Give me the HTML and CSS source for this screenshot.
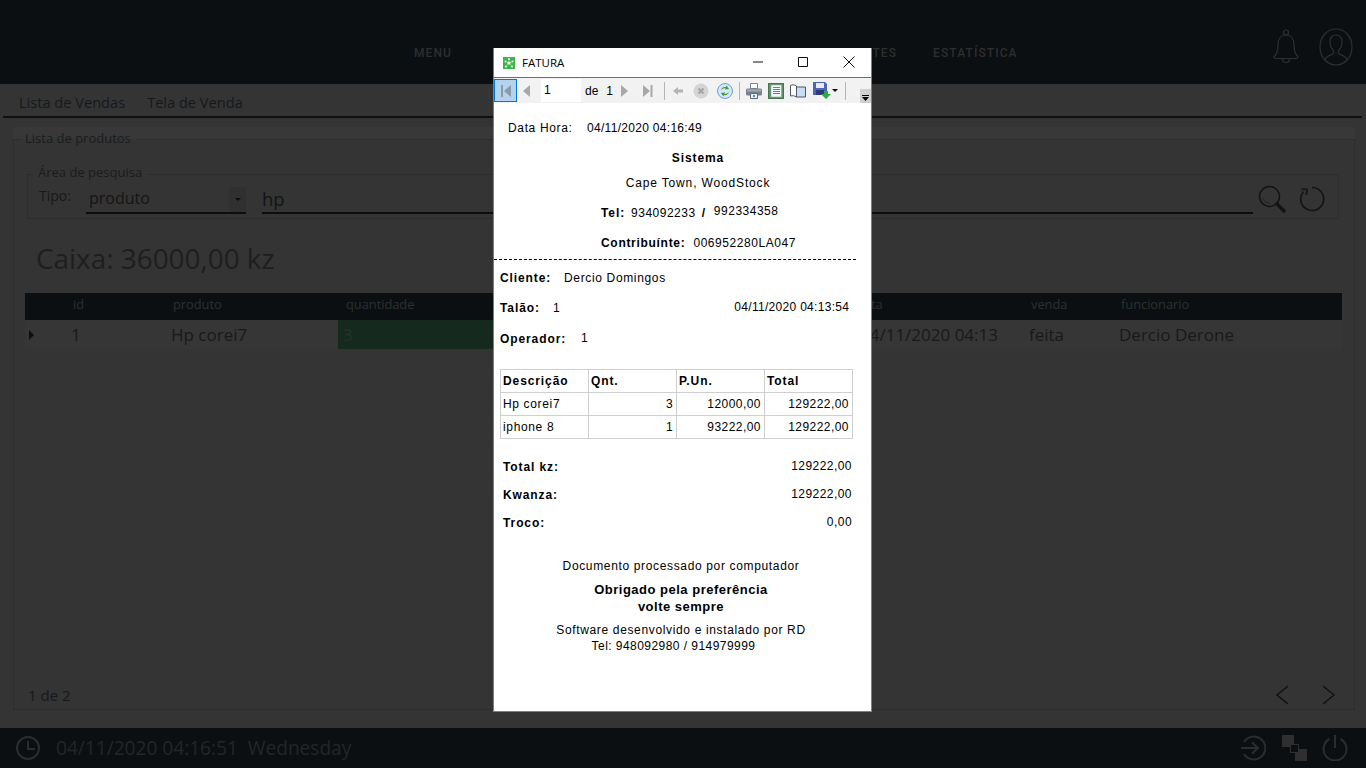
FILE: index.html
```html
<!DOCTYPE html>
<html lang="pt">
<head>
    <meta charset="utf-8">
    <title>Fatura</title>
    <link rel="stylesheet" href="styles.css">
</head>
<body>
    <header class="top-bar">
        <nav class="main-nav">
            <span>MENU</span>
            <span class="nav-far">CLIENTES</span>
            <span>ESTATÍSTICA</span>
        </nav>
        <svg class="bell-icon" viewBox="0 0 26 36" width="26" height="36">
            <path d="M1 28c3-3 4-6 4-12 0-6 3-10 8-10s8 4 8 10c0 6 1 9 4 12 0 1-1 1.500-2 1.500H3c-1 0-2-.5-2-1.500z"/>
            <circle cx="13" cy="3.500" r="2.500"/>
            <path d="M9.500 30a3.500 3.500 0 0 0 7 0"/>
        </svg>
        <svg class="user-icon" viewBox="0 0 34 38" width="34" height="38">
            <ellipse cx="17" cy="19" rx="16" ry="18"/>
            <path d="M6 32c1-4 6-5 8-6 1-1 1-3 0-4-2-2-3-5-3-8 0-5 3-7 6-7s6 2 6 7c0 3-1 6-3 8-1 1-1 3 0 4 2 1 7 2 8 6"/>
        </svg>
    </header>

    <main class="content">
        <div class="tabs">
            <span>Lista de Vendas</span>
            <span>Tela de Venda</span>
        </div>
        <div class="panel">
            <fieldset class="products">
                <legend>Lista de produtos</legend>
                <fieldset class="search">
                    <legend>Área de pesquisa</legend>
                    <label class="search-label">Tipo:</label>
                    <div class="search-select">produto<span class="select-btn"><i class="caret"></i></span></div>
                    <div class="search-input">hp</div>
                    <svg class="search-icon" viewBox="0 0 28 28" width="28" height="28">
                        <circle cx="11.500" cy="11.500" r="10"/>
                        <path class="thin" d="M5 13c1 3 4 5 7 5"/>
                        <path class="thick" d="M19 19l7 7"/>
                    </svg>
                    <svg class="reload-icon" viewBox="0 0 26 28" width="26" height="28">
                        <path d="M13 2.500a11.500 11.500 0 1 1-8.500 4"/>
                        <path d="M2.500 4l5.500.5-.5 5.500"/>
                    </svg>
                </fieldset>
                <div class="balance">Caixa: 36000,00 kz</div>
                <div class="grid-head">
                    <span></span><span>id</span><span>produto</span><span>quantidade</span><span>data</span><span>venda</span><span>funcionario</span>
                </div>
                <div class="grid-row">
                    <span class="row-arrow"></span><span>1</span><span>Hp corei7</span><span class="cell-green">3</span><span class="cell-date">04/11/2020 04:13</span><span>feita</span><span>Dercio Derone</span>
                </div>
                <div class="pager">
                    <span>1 de 2</span>
                    <svg class="pager-prev" viewBox="0 0 14 20" width="14" height="20"><path d="M13 1L2 10l11 9"/></svg>
                    <svg class="pager-next" viewBox="0 0 14 20" width="14" height="20"><path d="M1 1l11 9-11 9"/></svg>
                </div>
            </fieldset>
        </div>
    </main>

    <footer class="status-bar">
        <svg class="status-icon clock" viewBox="0 0 26 26" width="26" height="26">
            <circle cx="13" cy="13" r="11"/>
            <path d="M13 6v8h7"/>
        </svg>
        <span class="status-date">04/11/2020 04:16:51</span>
        <span class="status-day">Wednesday</span>
        <svg class="status-icon login" viewBox="0 0 26 26" width="26" height="26">
            <path d="M4 7a11.500 11.500 0 1 1 0 12"/>
            <path d="M1 13h16M12 7.500l6 5.500-6 5.500"/>
        </svg>
        <div class="windows-icon"><i></i><i></i><i></i></div>
        <svg class="status-icon power" viewBox="0 0 26 26" width="26" height="26">
            <path d="M7.500 4a11.500 11.500 0 1 0 11 0"/>
            <path d="M13 0v13"/>
        </svg>
    </footer>

    <div class="window">
        <div class="title-bar">
            <svg class="app-icon" viewBox="0 0 12 12" width="12" height="12">
                <rect width="12" height="12" fill="#3cb54a"/>
                <path d="M6 6V2M6 6L2.500 4.500M6 6l3.500-1.500M6 6L3 9.500M6 6l3 3.500" stroke="#a5e0ae" stroke-width=".6"/>
                <circle cx="6" cy="6" r="1.600" fill="#fff"/>
                <circle cx="6" cy="2" r="1" fill="#fff"/>
                <circle cx="2.500" cy="4.500" r="1" fill="#fff"/>
                <circle cx="9.500" cy="4.500" r="1" fill="#fff"/>
                <circle cx="3" cy="9.500" r="1" fill="#fff"/>
                <circle cx="9" cy="9.500" r="1" fill="#fff"/>
            </svg>
            <span class="title-text">FATURA</span>
            <svg class="win-btn win-min" viewBox="0 0 10 10" width="10" height="10"><path d="M0 5h10"/></svg>
            <svg class="win-btn win-max" viewBox="0 0 10 10" width="10" height="10"><path d="M.5.500h9v9h-9z"/></svg>
            <svg class="win-btn win-close" viewBox="0 0 12 12" width="12" height="12"><path d="M.5.500l11 11M11.500.500l-11 11"/></svg>
        </div>

        <div class="toolbar">
            <span class="tool tool-active">
                <svg viewBox="0 0 12 14" width="12" height="14"><path fill="#8c9aa6" d="M1 1h2v12H1zM11 1v12L4 7z"/></svg>
            </span>
            <span class="tool tool-prev">
                <svg viewBox="0 0 9 14" width="9" height="14"><path fill="#a8a8a8" d="M8 1v12L1 7z"/></svg>
            </span>
            <span class="page-input">1</span>
            <span class="page-count"><b>de</b><b>1</b></span>
            <span class="tool">
                <svg viewBox="0 0 9 14" width="9" height="14"><path fill="#a8a8a8" d="M1 1v12l7-6z"/></svg>
            </span>
            <span class="tool">
                <svg viewBox="0 0 11 14" width="11" height="14"><path fill="#a8a8a8" d="M1 1v12l7-6zM8.500 1h2v12h-2z"/></svg>
            </span>
            <span class="tool-sep"></span>
            <span class="tool">
                <svg viewBox="0 0 10 10" width="10" height="10"><path fill="#b4b4b4" d="M0 5l5-4v2.500h5v3H5V9z"/></svg>
            </span>
            <span class="tool">
                <svg viewBox="0 0 16 16" width="16" height="16">
                    <circle cx="8" cy="8" r="7.500" fill="#d4d4d4"/>
                    <path d="M5.500 5.500l5 5M10.500 5.500l-5 5" stroke="#a4a4a4" stroke-width="2"/>
                </svg>
            </span>
            <span class="tool">
                <svg viewBox="0 0 16 16" width="16" height="16">
                    <circle cx="8" cy="8" r="7.500" fill="#d6e6f7" stroke="#6c9fd8"/>
                    <path d="M4 7c.5-2.500 3-3.500 5-3l.5-1.500L12 6 8 6.500l.7-1.300C7 5 5.500 5.500 4 7z" fill="#3a9e3a"/>
                    <path d="M12 9c-.5 2.500-3 3.500-5 3l-.5 1.500L4 10l4-.5-.7 1.300c1.700.2 3.200-.3 4.700-1.800z" fill="#3a9e3a"/>
                </svg>
            </span>
            <span class="tool-sep"></span>
            <span class="tool">
                <svg viewBox="0 0 16 16" width="16" height="16">
                    <path fill="#fff" stroke="#7a8590" d="M4.500.500h7v5h-7z"/>
                    <rect y="5.500" width="16" height="7" rx="1.500" fill="#76828e"/>
                    <rect x="1" y="6.500" width="14" height="2" fill="#a2acb6"/>
                    <path fill="#e8eef4" stroke="#5f6a75" d="M4.500 10.500h7v5h-7z"/>
                    <rect x="7" y="12" width="2" height="2" fill="#4a90d9"/>
                </svg>
            </span>
            <span class="tool">
                <svg viewBox="0 0 16 16" width="16" height="16">
                    <rect x=".5" y=".5" width="15" height="15" fill="#5c9468" stroke="#46744f"/>
                    <rect x="3" y="2" width="10.500" height="12" fill="#f4f7fa" stroke="#8a97a5" stroke-width=".5"/>
                    <path d="M5 4.500h7M5 6.500h7M5 8.500h7M5 10.500h7" stroke="#6d7f91"/>
                </svg>
            </span>
            <span class="tool">
                <svg viewBox="0 0 16 14" width="16" height="14">
                    <path fill="#fff" stroke="#4c5964" d="M.5 12V1.500C2.500.5 4.500.5 6.500 2v11C4.500 11.500 2.500 11.500.5 12z"/>
                    <path fill="#c8dcf4" stroke="#4c5964" d="M6.500 3h9v10h-9z"/>
                </svg>
            </span>
            <span class="tool tool-save">
                <svg viewBox="0 0 18 17" width="18" height="17">
                    <path fill="#4f63b8" d="M0 0h12l2 2v11H0z"/>
                    <rect x="3" y="1" width="8" height="5" fill="#e8ecf6"/>
                    <rect x="3" y="8" width="8" height="5" fill="#2c3a78"/>
                    <path fill="#2aa84a" d="M11 9h4v3h3l-5 5-5-5h3z"/>
                </svg>
                <i class="caret caret-save"></i>
            </span>
            <span class="tool-sep"></span>
            <span class="tool-more">
                <svg viewBox="0 0 7 6" width="7" height="6"><path d="M0 0h7v1H0zM0 2h7L3.500 6z"/></svg>
            </span>
        </div>

        <div class="receipt">
            <div class="line line-date"><span class="date-label">Data Hora:</span><span class="tight">04/11/2020 04:16:49</span></div>
            <div class="line center gap-12"><b>Sistema</b></div>
            <div class="line center address gap-7">Cape Town, WoodStock</div>
            <div class="line line-tel gap-12"><b>Tel:</b><span class="tel-a">934092233</span><b class="tel-sep">/</b><span class="tel-b">992334358</span></div>
            <div class="line line-tel gap-12"><b class="label-nif">Contribuínte:</b><span class="nif">006952280LA047</span></div>
            <div class="dashes"></div>
            <div class="line line-client gap-9"><b class="label-client">Cliente:</b><span>Dercio Domingos</span></div>
            <div class="line line-client gap-12"><b class="label-talao">Talão:</b><span>1</span><span class="talao-date tight">04/11/2020 04:13:54</span></div>
            <div class="line line-client gap-13"><b class="label-op">Operador:</b><span class="op-value">1</span></div>

            <table class="items">
                <thead>
                    <tr><th>Descrição</th><th>Qnt.</th><th>P.Un.</th><th>Total</th></tr>
                </thead>
                <tbody>
                    <tr><td>Hp corei7</td><td class="num">3</td><td class="num">12000,00</td><td class="num">129222,00</td></tr>
                    <tr><td>iphone 8</td><td class="num">1</td><td class="num">93222,00</td><td class="num">129222,00</td></tr>
                </tbody>
            </table>

            <div class="line totals first-total"><b>Total kz:</b><span>129222,00</span></div>
            <div class="line totals gap-10"><b>Kwanza:</b><span>129222,00</span></div>
            <div class="line totals gap-10"><b>Troco:</b><span>0,00</span></div>

            <div class="thanks">
                <div class="thanks-doc">Documento processado por computador</div>
                <div class="thanks-bold"><b>Obrigado pela preferência</b><br><b>volte sempre</b></div>
                <div class="thanks-credit">Software desenvolvido e instalado por RD</div>
                <div class="thanks-phone">Tel: 948092980 / 914979999</div>
            </div>
        </div>
    </div>
</body>
</html>
```

FILE: styles.css
```css
* {
    box-sizing: border-box;
}

html, body {
    margin: 0;
    height: 100%;
}

body {
    width: 1366px;
    height: 768px;
    overflow: hidden;
    display: flex;
    flex-direction: column;
    position: relative;
    background: #323232;
    font-family: "Open Sans", sans-serif;
    color: #1d1d1d;
}

/* top bar */
.top-bar {
    height: 84px;
    flex: none;
    background: #0b0f12;
    position: relative;
    display: flex;
    align-items: center;
}

.main-nav {
    display: flex;
    gap: 36px;
    margin-left: 414px;
    margin-top: 22px;
    font-family: Roboto, sans-serif;
    font-size: 12px;
    font-weight: 500;
    letter-spacing: 1.100px;
    color: #2e2e2e;
}

.nav-far {
    margin-left: 346px;
}

.bell-icon, .user-icon {
    position: absolute;
    fill: none;
    stroke: #2f2f2f;
    stroke-width: 1.200;
}

.bell-icon {
    left: 1273px;
    top: 29px;
}

.user-icon {
    left: 1319px;
    top: 28px;
}

/* content */
.content {
    flex: 1;
    padding: 0 4px 0 3px;
    display: flex;
    flex-direction: column;
    background: #343434;
}

.tabs {
    height: 34px;
    flex: none;
    display: flex;
    gap: 22px;
    padding: 7px 0 0 16px;
    border-bottom: 2px solid #0d0f11;
    font-size: 14.600px;
    line-height: 22px;
    color: #15191d;
}

.panel {
    margin: 9px 7px 0 10px;
    padding-top: 3px;
    height: 583px;
    background: #383838;
    display: flex;
}

fieldset {
    margin: 0;
    border: 1px solid #2d2d2d;
    min-width: 0;
}

legend {
    padding: 0 5px 2px;
    font-size: 13px;
    line-height: 16px;
    color: #181c1f;
}

.products {
    flex: 1;
    display: flex;
    flex-direction: column;
    padding: 16px 12px 0 11px;
    background: #343434;
}

.products > legend {
    margin-left: -5px;
}

.search {
    margin: 1px 3px 0 2px;
    height: 54px;
    padding: 0 13px 0 11px;
    display: flex;
    align-items: flex-start;
}

.search > legend {
    margin-left: -6px;
    padding-bottom: 4px;
    line-height: 14px;
}

.search-label {
    font-size: 14px;
    line-height: 20px;
    margin-top: 3px;
    width: 47px;
    flex: none;
    color: #181818;
}

.search-select {
    width: 160px;
    flex: none;
    height: 27px;
    margin-top: 4px;
    padding: 1px 3px;
    border-bottom: 2px solid #0b0e11;
    font-size: 16px;
    line-height: 20px;
    position: relative;
    color: #141414;
}

.select-btn {
    position: absolute;
    right: 0;
    top: 0;
    bottom: 0;
    width: 17px;
    background: #303030;
    display: flex;
    align-items: center;
    justify-content: center;
}

.caret {
    display: block;
    width: 0;
    height: 0;
    border: 3px solid transparent;
    border-top-color: #0c0c0c;
    border-bottom: 0;
}

.search-input {
    margin-left: 16px;
    flex: 1;
    height: 27px;
    margin-top: 4px;
    border-bottom: 2px solid #0b0e11;
    font-size: 18.500px;
    line-height: 24px;
    color: #111417;
}

.search-icon, .reload-icon {
    flex: none;
    fill: none;
    stroke: #121416;
    stroke-width: 1.500;
}

.search-icon {
    margin-left: 5px;
    margin-top: 2px;
}

.search-icon .thin {
    stroke: #2a2a2a;
}

.search-icon .thick {
    stroke-width: 3.500;
    stroke-linecap: round;
}

.reload-icon {
    margin-left: 13px;
    margin-top: 2px;
    stroke-width: 1.700;
}

.balance {
    margin: 21px 0 0 11px;
    font-size: 27.900px;
    line-height: 36px;
    color: #1e1e1e;
    height: 53px;
}

.grid-head, .grid-row {
    display: grid;
    grid-template-columns: 40px 100px 173px 510px 175px 90px 1fr;
    flex: none;
}

.grid-head {
    height: 27px;
    background: #0b0f12;
    font-size: 12.800px;
    line-height: 22px;
    color: #2f2f2f;
}

.grid-head span {
    padding-left: 8px;
}

.grid-row {
    height: 29px;
    font-size: 17px;
    line-height: 30px;
    color: #191919;
    background: #363636;
}

.grid-row span {
    padding-left: 6px;
}

.grid-row .cell-green {
    padding-left: 5px;
    background: #16291f;
    color: #24332b;
    height: 29px;
}

.grid-row .cell-date {
    padding-left: 12px;
    white-space: nowrap;
}

.row-arrow {
    position: relative;
}

.row-arrow::after {
    content: "";
    position: absolute;
    left: 4px;
    top: 10px;
    border: 5px solid transparent;
    border-left-color: #0d0f11;
    border-right: 0;
}

.pager {
    margin-top: auto;
    height: 28px;
    display: flex;
    align-items: center;
    padding-left: 3px;
    font-size: 15px;
    color: #14191e;
}

.pager svg {
    fill: none;
    stroke: #0f1215;
    stroke-width: 1.500;
}

.pager-prev {
    margin-left: auto;
}

.pager-next {
    margin-left: 33px;
    margin-right: 6px;
}

/* bottom bar */
.status-bar {
    height: 40px;
    flex: none;
    background: #0b0f12;
    display: flex;
    align-items: center;
    color: #252525;
    padding-left: 15px;
    padding-right: 18px;
}

.status-icon {
    fill: none;
    stroke: #2c2c2c;
    stroke-width: 2;
    flex: none;
}

.status-date {
    margin-left: 15px;
    font-size: 19.100px;
}

.status-day {
    margin-left: 10px;
    font-size: 19.100px;
}

.login {
    margin-left: auto;
}

.windows-icon {
    position: relative;
    width: 25px;
    height: 26px;
    margin-left: 16px;
    margin-right: 15px;
}

.windows-icon i {
    position: absolute;
    background: #2f2f2f;
}

.windows-icon i:nth-child(1) {
    left: 0;
    top: 0;
    width: 12px;
    height: 12px;
}

.windows-icon i:nth-child(2) {
    left: 13px;
    top: 14px;
    width: 12px;
    height: 12px;
}

.windows-icon i:nth-child(3) {
    left: 8px;
    top: 9px;
    width: 9px;
    height: 9px;
    background: #0b0f12;
    border: 1px solid #2f2f2f;
}

/* report window */
.window {
    position: absolute;
    left: 493px;
    top: 48px;
    width: 379px;
    height: 664px;
    background: #fff;
    border: 1px solid #7e7e7e;
    border-top: 0;
    color: #000;
}

.title-bar {
    height: 30px;
    display: flex;
    align-items: center;
    padding-left: 9px;
    border-bottom: 1px solid #6e6e6e;
    position: relative;
}

.title-text {
    margin-left: 7px;
    font-size: 11.500px;
}

.win-btn {
    position: absolute;
    fill: none;
    stroke: #111;
    stroke-width: 1;
}

.win-min {
    left: 259px;
    top: 9px;
}

.win-max {
    left: 304px;
    top: 9px;
}

.win-close {
    left: 349px;
    top: 8px;
}

.toolbar {
    height: 25px;
    background: #f2f2f2;
    display: grid;
    grid-template-columns: 23px 24px 40px 34px 18px 28px 6px 22px 24px 23px 6px 23px 22px 22px 29px 14px 1fr;
    align-items: center;
    font-family: "Liberation Sans", sans-serif;
    font-size: 12px;
    position: relative;
}

.tool {
    display: flex;
    align-items: center;
    justify-content: center;
    height: 23px;
}

.tool-active {
    background: #b3d3ee;
    border: 1px solid #0078d7;
}

.tool-prev {
    justify-content: flex-start;
    padding-left: 5px;
}

.tool-save {
    justify-content: flex-start;
    padding-left: 4px;
}

.caret-save {
    margin-left: 1px;
    border-width: 3px;
}

.page-input {
    background: #fff;
    height: 23px;
    line-height: 22px;
    padding-left: 3px;
}

.page-count {
    display: flex;
    gap: 8px;
    padding-left: 4px;
}

.page-count b {
    font-weight: 400;
}

.tool-sep {
    justify-self: center;
    width: 1px;
    height: 18px;
    background: #b4b4b4;
}

.tool-more {
    position: absolute;
    right: 0;
    bottom: 0;
    width: 11px;
    height: 14px;
    background: #d0d0d0;
    display: flex;
    align-items: flex-end;
    justify-content: center;
    padding-bottom: 2px;
}

/* receipt */
.receipt {
    font-family: "Liberation Sans", sans-serif;
    font-size: 12px;
    letter-spacing: .65px;
    padding-top: 16px;
}

.receipt b {
    letter-spacing: .9px;
}

.line {
    height: 18px;
    line-height: 18px;
}

.receipt .tight {
    letter-spacing: .3px;
}

.center {
    text-align: center;
    width: 408px;
}

.address {
    letter-spacing: .85px;
}

.gap-7 { margin-top: 7px; }
.gap-9 { margin-top: 9px; }
.gap-10 { margin-top: 10px; }
.gap-12 { margin-top: 12px; }
.gap-13 { margin-top: 13px; }

.line-date {
    display: flex;
    padding-left: 14px;
}

.date-label {
    width: 79px;
}

.line-tel {
    display: flex;
    padding-left: 107px;
}

.tel-a {
    margin-left: 6px;
    letter-spacing: .5px;
}

.tel-sep {
    margin-left: 6px;
}

.tel-b {
    margin-left: 8px;
    margin-top: -2px;
    letter-spacing: .5px;
}

.receipt .label-nif {
    letter-spacing: .7px;
}

.nif {
    margin-left: 8px;
    letter-spacing: .55px;
}

.dashes {
    margin-top: 7px;
    width: 362px;
    height: 1px;
    border-top: 1px dashed #000;
}

.line-client {
    display: flex;
    padding-left: 6px;
}

.label-client {
    width: 64px;
}

.label-talao {
    width: 53px;
}

.label-op {
    width: 81px;
}

.op-value {
    margin-top: -1px;
}

.talao-date {
    margin-left: 174px;
    margin-top: -1px;
}

.items {
    margin: 21px 0 0 6px;
    width: 353px;
    border-collapse: collapse;
    table-layout: fixed;
}

.items th, .items td {
    border: 1px solid #cfcfcf;
    padding: 0 2px;
    height: 23px;
    font-weight: 400;
    text-align: left;
}

.items th {
    font-weight: 700;
    letter-spacing: .9px;
}

.items .num {
    text-align: right;
    letter-spacing: .45px;
    padding-right: 3px;
}

.totals {
    display: flex;
    justify-content: space-between;
    padding: 0 19px 0 9px;
}

.totals span {
    margin-top: -1px;
    letter-spacing: .45px;
}

.receipt .totals b {
    letter-spacing: .9px;
}

.first-total {
    margin-top: 19px;
}

.thanks {
    width: 374px;
    text-align: center;
    margin-top: 25px;
}

.thanks-doc {
    line-height: 18px;
}

.thanks-bold {
    margin-top: 6px;
    line-height: 17px;
    font-size: 13px;
}

.receipt .thanks-bold b {
    letter-spacing: .5px;
}

.thanks-credit {
    margin-top: 7px;
    line-height: 16px;
}

.thanks-phone {
    line-height: 16px;
    padding-right: 15px;
    letter-spacing: .45px;
}
```
